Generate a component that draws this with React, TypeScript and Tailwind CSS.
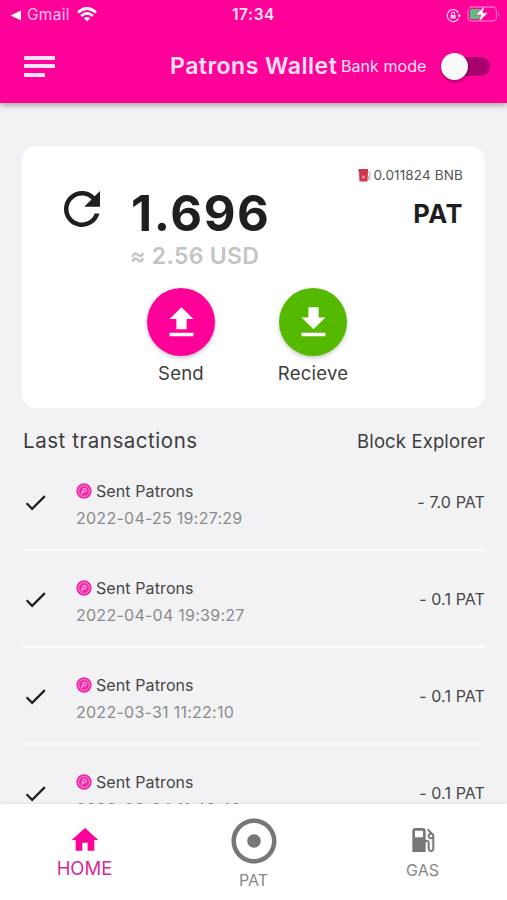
import type { ReactNode } from "react";

const transactions = [
  { date: "2022-04-25 19:27:29", amount: "- 7.0 PAT" },
  { date: "2022-04-04 19:39:27", amount: "- 0.1 PAT" },
  { date: "2022-03-31 11:22:10", amount: "- 0.1 PAT" },
  { date: "2022-03-24 11:42:40", amount: "- 0.1 PAT" },
];

function Glyph({ d, className }: { d: string; className: string }) {
  return (
    <svg viewBox="0 0 24 24" fill="currentColor" className={`shrink-0 ${className}`}>
      <path d={d} />
    </svg>
  );
}

function StatusBar() {
  return (
    <div className="grid h-[30px] grid-cols-3 items-center px-[10px] text-white">
      <div className="flex items-center">
        <svg viewBox="0 0 11 11" className="h-[11px] w-[11px]" fill="#fff">
          <path d="M0.5 5.5 L11 0.5 V10.5 Z" />
        </svg>
        <span className="ml-[6px] w-[43px] text-[15.5px] leading-none tracking-[0.3px] text-[#ffc4ea]">Gmail</span>
        <svg viewBox="0 0 20 15" className="ml-[7px] h-[15px] w-5 -translate-y-px" fill="none" stroke="#fff" strokeWidth="2.7">
          <path d="M1 5.5 Q10 -2.5 19 5.5" />
          <path d="M4.2 9 Q10 3.8 15.8 9" />
          <path d="M7 11.3 Q10 8.9 13 11.3 L10 14.6 Z" fill="#fff" stroke="none" />
        </svg>
      </div>
      <div className="text-center text-[15.5px] leading-none font-semibold tracking-[0.6px] text-[#ffe3f5]">17:34</div>
      <div className="flex items-center justify-end gap-[6px]">
        <svg viewBox="0 0 15 15" className="h-[15px] w-[15px]" fill="none" stroke="#ffd0ee" strokeWidth="1.3">
          <path d="M12.6 5 A6 6 0 1 0 12.4 10.6" />
          <path d="M13.4 9 V6" />
          <path d="M11.4 7.3 H15 L13.2 9.8 Z" fill="#ffd0ee" stroke="none" />
          <rect x="4.6" y="7" width="5" height="3.6" fill="#ffd0ee" stroke="none" />
          <path d="M5.6 7.2 V5.8 A1.5 1.5 0 0 1 8.6 5.8 V7.2" strokeWidth="1.1" />
        </svg>
        <svg viewBox="0 0 33 18" className="-mr-[3px] h-[18px] w-[33px] -translate-y-px" fill="none">
          <rect x="1" y="2" width="28.5" height="14" rx="4" stroke="#ff64c2" strokeWidth="1.3" />
          <path d="M4.5 4 H13 V14 H4.5 Q3 14 3 12.5 V5.5 Q3 4 4.5 4Z" fill="#54c478" />
          <path d="M31 6.5 Q33 9 31 11.5 Z" fill="#ff64c2" />
          <path d="M18 0.5 L8.4 10 H13.7 L11.5 17.5 L21.2 7.7 H15.8 Z" fill="#fff" stroke="#ff0099" strokeWidth="0.6" />
        </svg>
      </div>
    </div>
  );
}

function Header() {
  return (
    <header className="relative z-10 h-[103px] shrink-0 bg-[#ff0099] shadow-[0_2px_6px_rgba(0,0,0,0.35)]">
      <StatusBar />
      <div className="flex h-[72px] items-center pl-6 pr-[16px] text-[#ffe3f5]">
        <div className="flex w-[146px] flex-col gap-[4.5px]">
          <span className="h-[4px] w-[31px] bg-[#ffe3f5]" />
          <span className="h-[4px] w-[31px] bg-[#ffe3f5]" />
          <span className="h-[4px] w-[21px] bg-[#ffe3f5]" />
        </div>
        <h1 className="w-[171px] whitespace-nowrap text-[23px] leading-none font-semibold tracking-[0.5px]">Patrons Wallet</h1>
        <span className="w-[100px] whitespace-nowrap text-[16px] leading-none tracking-[0.05px]">Bank mode</span>
        <div className="flex h-[19px] w-[49px] items-center rounded-full bg-[#a8006c]">
          <span className="h-[27px] w-[27px] rounded-full bg-[#fafafa] shadow-[0_2px_3px_rgba(0,0,0,0.35)]" />
        </div>
      </div>
    </header>
  );
}

function FuelPump() {
  return (
    <svg viewBox="0 0 13 14" className="h-[14px] w-[13px]">
      <path d="M10 3 L12 5 V11 Q11.5 13 10.5 11 V8" fill="none" stroke="#b9b1b2" strokeWidth="1" />
      <path d="M0.5 1 H10 V3 L9.5 13.5 H1.5 L1 4 H0.5 Z" fill="#d9344d" />
      <rect x="2" y="2.5" width="6" height="2.5" fill="#a84a55" />
      <circle cx="5.5" cy="9" r="1.5" fill="#f3a3ae" />
    </svg>
  );
}

function Action({ label, color, d }: { label: string; color: string; d: string }) {
  return (
    <div className="flex w-[132px] flex-col items-center">
      <div className={`flex h-[68px] w-[68px] items-center justify-center rounded-full text-white shadow-[0_2px_4px_rgba(0,0,0,0.22)] ${color}`}>
        <Glyph className="h-[41px] w-[41px]" d={d} />
      </div>
      <span className="mt-[7px] text-[18.5px] leading-[20px] tracking-[0.25px] text-[#3d3d3d]">{label}</span>
    </div>
  );
}

function BalanceCard() {
  return (
    <section className="mx-[22px] mt-[43px] h-[262px] shrink-0 rounded-[14px] bg-white pt-[20px]">
      <div className="flex h-[18px] items-center justify-end gap-[2px] pr-[22px] text-[13.5px] text-[#555]">
        <FuelPump />
        <span className="tracking-[0.13px]">0.011824 BNB</span>
      </div>
      <div className="flex h-[59px] items-center pl-[33px] pr-[22px] text-[#1f1f1f]">
        <Glyph
          className="h-[54px] w-[54px] -translate-y-[5px]"
          d="M17.65 6.35A7.96 7.96 0 0 0 12 4a8 8 0 1 0 7.73 10h-2.08A6 6 0 1 1 12 6c1.66 0 3.14.69 4.22 1.78L13 11h7V4l-2.35 2.35z"
        />
        <span className="ml-[22px] text-[49px] leading-none font-bold tracking-[1.6px]">1.696</span>
        <span className="ml-auto text-[25.5px] leading-none font-bold tracking-[0.5px]">PAT</span>
      </div>
      <p className="ml-[108px] h-[27px] text-[23px] leading-[27px] font-semibold tracking-[0.3px] text-[#c4c4c4]">≈ 2.56 USD</p>
      <div className="mt-[18px] flex pl-[93px]">
        <Action label="Send" color="bg-[#ff0099]" d="M9 16h6v-6h4l-7-7-7 7h4v6zm-4 2h14v2H5v-2z" />
        <Action label="Recieve" color="bg-[#55b900]" d="M19 9h-4V3H9v6H5l7 7 7-7zM5 18v2h14v-2H5z" />
      </div>
    </section>
  );
}

function Coin() {
  return (
    <svg viewBox="0 0 16 16" className="h-4 w-4" fill="none">
      <circle cx="8" cy="8" r="7.7" fill="#ee2aa6" />
      <circle cx="8" cy="8" r="5.5" stroke="#ff8fd8" strokeWidth="0.9" />
      <path d="M5.6 11.2 L7.6 5.5 H9.2 Q11.3 6.8 9 8.8 L6.6 9" stroke="#ffb5e5" strokeWidth="1.1" />
    </svg>
  );
}

function Transaction({ date, amount }: { date: string; amount: string }) {
  return (
    <li className="flex h-[97px] shrink-0 items-center border-b-2 border-[#fcfcfd] text-[#464646]">
      <Glyph className="-ml-px mt-[2px] h-[27px] w-[27px] text-[#1f1f1f]" d="M9 16.17L4.83 12l-1.42 1.41L9 19 21 7l-1.41-1.41z" />
      <div className="ml-[27px] mt-[5px]">
        <div className="flex h-[27px] items-center gap-[4px] text-[16px] tracking-[0.1px]">
          <Coin />
          <span>Sent Patrons</span>
        </div>
        <div className="h-[27px] text-[16px] leading-[28px] tracking-[0.26px] text-[#8b8b8d]">{date}</div>
      </div>
      <span className="ml-auto text-[16px] tracking-[0.1px]">{amount}</span>
    </li>
  );
}

function Tab({ label, className, children }: { label: string; className: string; children: ReactNode }) {
  return (
    <div className={`flex flex-1 flex-col items-center ${className}`}>
      {children}
      <span>{label}</span>
    </div>
  );
}

export default function App() {
  return (
    <div className="flex h-[900px] w-[507px] flex-col overflow-hidden bg-[#f2f2f4] font-['Inter','Liberation_Sans',sans-serif]">
      <Header />
      <BalanceCard />
      <main className="flex min-h-0 flex-1 flex-col overflow-hidden pl-[23px] pr-[22px]">
        <div className="flex h-[46px] shrink-0 items-center justify-between pt-[21px] text-[#3d3d3d]">
          <h2 className="text-[20.5px] tracking-[0.55px]">Last transactions</h2>
          <span className="text-[18.5px] tracking-[0.13px]">Block Explorer</span>
        </div>
        <ul className="flex flex-col">
          {transactions.map((t) => (
            <Transaction key={t.date} {...t} />
          ))}
        </ul>
      </main>
      <nav className="flex h-[96px] shrink-0 bg-white text-[#777] shadow-[0_-1px_3px_rgba(0,0,0,0.06)]">
        <Tab label="HOME" className="pt-[20px] text-[18.5px] leading-[24px] text-[#d62a94]">
          <Glyph className="h-[32px] w-[32px] text-[#ff0099]" d="M10 20v-6h4v6h5v-8h3L12 3 2 12h3v8z" />
        </Tab>
        <Tab label="PAT" className="pt-[10px] text-[16px] leading-[24px] text-[#888]">
          <Glyph
            className="h-[54px] w-[54px] text-[#777]"
            d="M12 2C6.49 2 2 6.49 2 12s4.49 10 10 10 10-4.49 10-10S17.51 2 12 2zm0 18c-4.41 0-8-3.59-8-8s3.59-8 8-8 8 3.59 8 8-3.59 8-8 8zm3-8c0 1.66-1.34 3-3 3s-3-1.34-3-3 1.34-3 3-3 3 1.34 3 3z"
          />
        </Tab>
        <Tab label="GAS" className="pt-[20px] text-[16px] leading-[28px] text-[#888]">
          <Glyph
            className="h-[32px] w-[32px] text-[#777]"
            d="M19.77 7.23l.01-.01-3.72-3.72L15 4.56l2.11 2.11c-.94.36-1.61 1.26-1.61 2.33 0 1.38 1.12 2.5 2.5 2.5.36 0 .69-.08 1-.21v7.21c0 .55-.45 1-1 1s-1-.45-1-1V14c0-1.1-.9-2-2-2h-1V5c0-1.1-.9-2-2-2H6c-1.1 0-2 .9-2 2v16h10v-7.5h1.5v5c0 1.38 1.12 2.5 2.5 2.5s2.5-1.12 2.5-2.5V9c0-.69-.28-1.32-.73-1.77zM12 10H6V5h6v5zm6 0c-.55 0-1-.45-1-1s.45-1 1-1 1 .45 1 1-.45 1-1 1z"
          />
        </Tab>
      </nav>
    </div>
  );
}
